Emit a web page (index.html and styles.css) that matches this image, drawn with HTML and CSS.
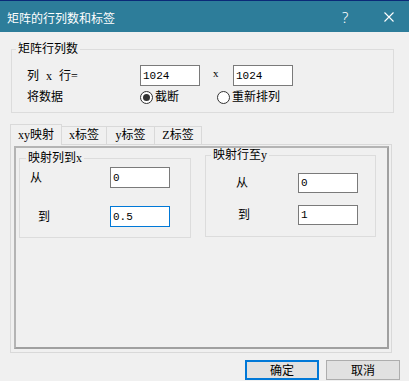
FILE: index.html
```html
<!DOCTYPE html>
<html lang="zh">
<head>
    <meta charset="UTF-8">
    <title>矩阵的行列数和标签</title>
    <link rel="stylesheet" href="styles.css">
</head>
<body>

    <div class="titlebar">
        <span class="title">矩阵的行列数和标签</span>
        <span class="help">?</span>
        <svg class="close" width="10" height="10" viewBox="0 0 10 10">
            <path d="M0.5 0.5L9.5 9.5M9.5 0.5L0.5 9.5" stroke="#fff" stroke-width="1.1" fill="none"/>
        </svg>
    </div>

    <fieldset class="group size-group">
        <legend>矩阵行列数</legend>
        <div class="row row-size">
            <span class="label">列<span class="mul">x</span>行=</span>
            <input class="field" type="text" value="1024">
            <span class="times">x</span>
            <input class="field" type="text" value="1024">
        </div>
        <div class="row row-mode">
            <span class="label">将数据</span>
            <label class="option option-first"><span class="radio checked"></span>截断</label>
            <label class="option"><span class="radio"></span>重新排列</label>
        </div>
    </fieldset>

    <div class="tabs">
        <div class="tab-strip">
            <div class="tab tab-xy active">xy映射</div>
            <div class="tab tab-x">x标签</div>
            <div class="tab tab-y">y标签</div>
            <div class="tab tab-z">Z标签</div>
        </div>
        <div class="tab-panel">
            <div class="panel-inner">
                <fieldset class="group map-x">
                    <legend>映射列到x</legend>
                    <div class="row map-row first">
                        <span class="label from">从</span>
                        <input class="field" type="text" value="0">
                    </div>
                    <div class="row map-row second">
                        <span class="label to">到</span>
                        <input class="field focused" type="text" value="0.5">
                    </div>
                </fieldset>
                <fieldset class="group map-y">
                    <legend>映射行至y</legend>
                    <div class="row map-row first">
                        <span class="label from">从</span>
                        <input class="field short" type="text" value="0">
                    </div>
                    <div class="row map-row second">
                        <span class="label to">到</span>
                        <input class="field short" type="text" value="1">
                    </div>
                </fieldset>
            </div>
        </div>
    </div>

    <div class="actions">
        <button class="btn primary">确定</button>
        <button class="btn">取消</button>
    </div>

</body>
</html>
```

FILE: styles.css
```css
:root {
    --bg-color: #f0f0f0;
    --title-bg: #2d7d9a;
    --group-border: #dcdcdc;
    --tab-border: #d9d9d9;
    --frame-border: #a0a0a0;
    --field-border: #7a7a7a;
    --focus-color: #0078d7;
    --dialog-font: "Liberation Serif", "Noto Sans CJK SC", serif;
}

body {
    margin: 0;
    width: 409px;
    height: 381px;
    overflow: hidden;
    background: var(--bg-color);
    font-family: var(--dialog-font);
    font-size: 12px;
    color: #000;
}

/* Title bar */
.titlebar {
    height: 31px;
    border-top: 1px solid #0b2a78;
    background: var(--title-bg);
    color: #fff;
    display: flex;
    align-items: center;
    padding: 0 15px 0 7px;
    font-family: "Noto Sans CJK SC", sans-serif;
}

.title {
    flex: 1;
    line-height: 14px;
    margin-top: 2px;
}

.help {
    width: 7px;
    margin-right: 35px;
    font-family: "Noto Sans", sans-serif;
    font-size: 15px;
    font-weight: 300;
    line-height: 15px;
    margin-top: 1px;
}

.close {
    display: block;
    margin-top: 1px;
}

/* Group boxes */
.group {
    margin: 0;
    padding: 0;
    min-width: 0;
    border: 1px solid var(--group-border);
    box-sizing: border-box;
}

.group legend {
    padding: 0 2px;
    font-size: 12px;
    line-height: 14px;
}

.row {
    display: flex;
    align-items: center;
}

.label {
    flex-shrink: 0;
    line-height: 14px;
}

.mul {
    margin: 0 7px;
}

.field {
    margin: 0;
    width: 60px;
    height: 21px;
    box-sizing: border-box;
    border: 1px solid var(--field-border);
    padding: 0 2px;
    background: #fff;
    font-family: "Liberation Mono", monospace;
    font-size: 11px;
    color: #000;
    outline: none;
}

.field.short {
    height: 20px;
}

.field.focused {
    border-color: var(--focus-color);
}

/* Matrix size group */
.size-group {
    margin: 10px 0 0 11px;
    width: 383px;
    padding: 0 0 7px 4px;
}

.row-size {
    margin-top: 9px;
    height: 21px;
    padding-left: 11px;
}

.row-size .label,
.row-mode .label {
    width: 113px;
}

.times {
    width: 20px;
    margin-left: 13px;
    margin-top: -5px;
    font-size: 11px;
}

.row-mode {
    margin-top: 3px;
    height: 16px;
    padding-left: 11px;
}

.option {
    display: flex;
    align-items: center;
    line-height: 14px;
}

.option-first {
    width: 77px;
}

.radio {
    width: 13px;
    height: 13px;
    box-sizing: border-box;
    border: 1px solid #333;
    border-radius: 50%;
    background: #fff;
    margin-right: 2px;
    display: flex;
    align-items: center;
    justify-content: center;
}

.radio.checked::after {
    content: "";
    width: 7px;
    height: 7px;
    border-radius: 50%;
    background: #333;
}

/* Tabs */
.tabs {
    margin: 11px 0 0 10px;
    width: 382px;
}

.tab-strip {
    display: flex;
    align-items: flex-end;
    height: 20px;
}

.tab {
    height: 18px;
    box-sizing: border-box;
    border: 1px solid var(--tab-border);
    border-bottom: none;
    margin-left: -1px;
    text-align: center;
    line-height: 17px;
    background: var(--bg-color);
}

.tab-xy { width: 52px; margin-left: 0; }
.tab-x { width: 46px; }
.tab-y { width: 49px; }
.tab-z { width: 48px; }

.tab.active {
    height: 21px;
    margin-bottom: -1px;
    line-height: 20px;
    position: relative;
    z-index: 1;
}

.tab-panel {
    height: 209px;
    box-sizing: border-box;
    border: 1px solid var(--tab-border);
    padding: 1px 2px 3px 3px;
}

.panel-inner {
    height: 100%;
    box-sizing: border-box;
    border: 2px solid var(--frame-border);
    border-top-color: #b4b4b4;
    border-left-color: #b4b4b4;
    display: flex;
    align-items: flex-start;
}

/* Mapping groups */
.map-x {
    width: 172px;
    margin: 3px 0 0 3px;
    padding: 0 0 10px 6px;
}

.map-x .first { margin-top: 2px; height: 21px; }
.map-x .second { margin-top: 18px; height: 21px; }
.map-x .from { margin-left: 4px; width: 80px; }
.map-x .to { margin-left: 12px; width: 72px; }

.map-y {
    width: 171px;
    margin: 0 0 0 14px;
    padding: 0 0 11px 5px;
}

.map-y .first { margin-top: 11px; height: 20px; }
.map-y .second { margin-top: 12px; height: 20px; }
.map-y .from { margin-left: 25px; width: 62px; }
.map-y .to { margin-left: 27px; width: 60px; }

/* Buttons */
.actions {
    display: flex;
    justify-content: flex-end;
    gap: 7px;
    margin-top: 7px;
    padding-right: 9px;
}

.btn {
    width: 74px;
    height: 20px;
    margin: 0;
    padding: 0;
    box-sizing: border-box;
    border: 1px solid #adadad;
    background: #e1e1e1;
    font-family: "Noto Sans CJK SC", sans-serif;
    font-size: 12px;
    line-height: 16px;
    color: #000;
}

.btn.primary {
    border: 2px solid var(--focus-color);
}
```
